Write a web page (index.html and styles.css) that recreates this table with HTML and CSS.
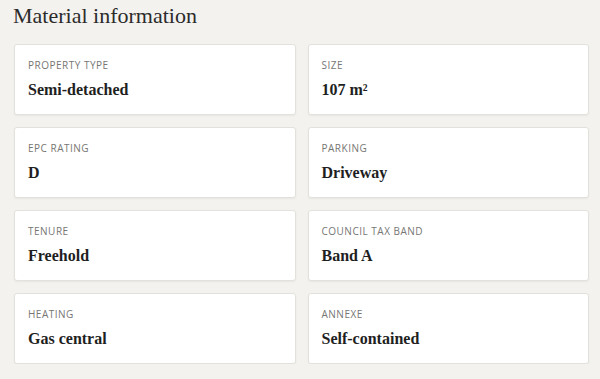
FILE: index.html
```html
<!DOCTYPE html>
<html>
<head>
<meta charset="utf-8">
<link rel="stylesheet" href="styles.css">
</head>
<body>
<section class="panel">
  <h2 class="title">Material information</h2>
  <div class="grid">
    <div class="card"><div class="label">Property type</div><div class="value">Semi-detached</div></div>
    <div class="card"><div class="label">Size</div><div class="value">107 m²</div></div>
    <div class="card"><div class="label">EPC rating</div><div class="value">D</div></div>
    <div class="card"><div class="label">Parking</div><div class="value">Driveway</div></div>
    <div class="card"><div class="label">Tenure</div><div class="value">Freehold</div></div>
    <div class="card"><div class="label">Council tax band</div><div class="value">Band A</div></div>
    <div class="card"><div class="label">Heating</div><div class="value">Gas central</div></div>
    <div class="card"><div class="label">Annexe</div><div class="value">Self-contained</div></div>
  </div>
</section>
</body>
</html>
```
FILE: styles.css
```css
html, body {
  margin: 0;
  padding: 0;
  background: #f3f2ee;
}
.panel {
  padding: 3px 11px 0 14px;
}
.title {
  margin: 0 0 16px -1px;
  font-family: "Liberation Serif", "Times New Roman", serif;
  font-weight: normal;
  font-size: 22px;
  line-height: 25px;
  color: #2b2b2b;
}
.grid {
  display: grid;
  grid-template-columns: 1fr 1fr;
  gap: 12.5px 12px;
}
.card {
  background: #fff;
  border: 1px solid #e3e1db;
  border-radius: 3px;
  box-shadow: 0 1px 2px rgba(0,0,0,0.05);
  padding: 14px 13px 13px;
  height: 70.5px;
  box-sizing: border-box;
}
.label {
  font-family: "Open Sans", "Liberation Sans", sans-serif;
  font-size: 10px;
  line-height: 13px;
  letter-spacing: 0.5px;
  text-transform: uppercase;
  color: #767674;
}
.value {
  margin-top: 8px;
  font-family: "Liberation Serif", "Times New Roman", serif;
  font-weight: bold;
  font-size: 16px;
  line-height: 20px;
  color: #1f1f1f;
}
```
